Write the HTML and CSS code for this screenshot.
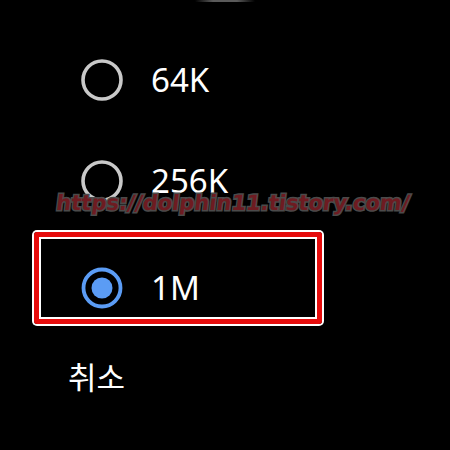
FILE: index.html
```html
<!DOCTYPE html>
<html lang="ko">
<head>
<meta charset="utf-8">
<link rel="stylesheet" href="styles.css">
</head>
<body>
<div class="screen">
  <div class="indicator"></div>
  <div class="list">
    <div class="row">
      <svg class="radio" width="42" height="42" viewBox="0 0 42 42"><circle cx="21" cy="21" r="19" fill="none" stroke="#c9c9c9" stroke-width="3.6"/></svg>
      <span class="label">64K</span>
    </div>
    <div class="row">
      <svg class="radio" width="42" height="42" viewBox="0 0 42 42"><circle cx="21" cy="21" r="19" fill="none" stroke="#c9c9c9" stroke-width="3.6"/></svg>
      <span class="label">256K</span>
    </div>
    <div class="row selected">
      <svg class="radio" width="42" height="42" viewBox="0 0 42 42"><circle cx="21" cy="21" r="18.5" fill="none" stroke="#5b9cf5" stroke-width="3.8"/><circle cx="21" cy="21" r="10.5" fill="#5b9cf5"/></svg>
      <span class="label">1M</span>
    </div>
    <div class="cancel">취소</div>
  </div>
  <div class="watermark">https://dolphin11.tistory.com/</div>
</div>
</body>
</html>
```
FILE: styles.css
```css
html, body {
  margin: 0;
  padding: 0;
  background: #000;
}
.screen {
  position: relative;
  width: 450px;
  height: 450px;
  overflow: hidden;
  background: #000;
}
.indicator {
  width: 60px;
  height: 2px;
  margin: 0 auto;
  background: linear-gradient(to right, rgba(90,90,90,0), #5a5a5a 30%, #5a5a5a 70%, rgba(90,90,90,0));
}
.list {
  display: flex;
  flex-direction: column;
  padding-left: 34px;
  padding-top: 57px;
}
.row {
  display: flex;
  align-items: center;
  height: 42px;
  padding-left: 47px;
  margin-bottom: 59px;
}
.radio {
  flex: none;
  display: block;
}
.label {
  margin-left: 28px;
  color: #fff;
  font-family: "Noto Sans", sans-serif;
  font-size: 33px;
  line-height: 42px;
}
.row.selected {
  box-sizing: border-box;
  width: 288px;
  height: 92px;
  margin-top: -29px;
  margin-bottom: 0;
  padding-left: 42px;
  padding-top: 20px;
  border: 5px solid #e60c0c;
  border-radius: 3px;
  box-shadow: 0 0 0 2px #fff, inset 0 0 0 2px #fff;
}
.cancel {
  margin-top: 32px;
  margin-left: 34px;
  color: #fff;
  font-family: "Noto Sans CJK KR", sans-serif;
  font-size: 31px;
  line-height: 40px;
}
.watermark {
  position: absolute;
  left: 55px;
  top: 191px;
  font-family: "DejaVu Sans", sans-serif;
  font-weight: bold;
  font-size: 21px;
  color: #6e1b21;
  -webkit-text-stroke: 3px #4a4a4a;
  paint-order: stroke fill;
  transform: skewX(-7deg);
  transform-origin: left bottom;
}
```
